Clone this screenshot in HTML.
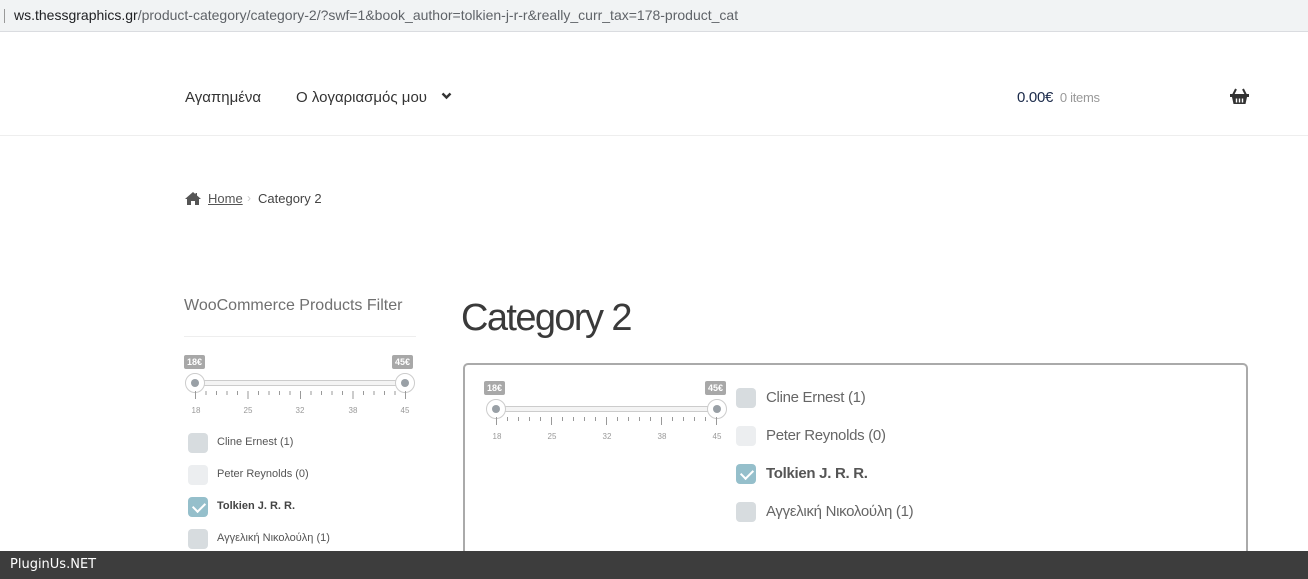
<!DOCTYPE html>
<html><head><meta charset="utf-8"><style>
*{margin:0;padding:0;box-sizing:border-box}
html,body{width:1308px;height:579px;overflow:hidden}
body{background:#fff;font-family:"Liberation Sans","DejaVu Sans",sans-serif;position:relative;color:#404040}
.a{position:absolute;white-space:nowrap}
.lab{position:absolute;background:#a8a8a8;color:#fff;font-size:9px;font-weight:bold;height:14px;line-height:14px;padding:0 3px;border-radius:2px}
.trk{position:absolute;height:6px;border:1px solid #ccc;background:#f4f4f4;border-radius:3px}
.hd{position:absolute;width:20px;height:20px;border-radius:50%;background:#fff;border:1px solid #ccc}
.hd:after{content:"";position:absolute;left:5px;top:5px;width:8px;height:8px;border-radius:50%;background:#99a0a6}
.num{position:absolute;font-size:8px;color:#999;transform:translateX(-50%)}
.cb{position:absolute;width:20px;height:20px;border-radius:4px;background:#d7dcdf}
.cb.l{background:#eceef0}
.cb.c{background:#95bfcb}
.cb.c:after{content:"";position:absolute;left:7px;top:3px;width:6px;height:10px;border:solid #fff;border-width:0 2px 2px 0;transform:rotate(45deg)}
.it{font-size:15px;color:#666;letter-spacing:-0.3px}
</style></head><body>
<div class="a" style="left:0;top:0;width:1308px;height:32px;background:#f1f3f4;border-bottom:1px solid #dadce0"></div>
<div class="a" style="left:4px;top:9px;width:1px;height:14px;background:#999"></div>
<div class="a" style="left:14px;top:7px;font-size:14px;color:#202124">ws.thessgraphics.gr<span style="color:#5f6368">/product-category/category-2/?swf=1&amp;book_author=tolkien-j-r-r&amp;really_curr_tax=178-product_cat</span></div>
<div class="a" style="left:0;top:135px;width:1308px;height:1px;background:#eee"></div>
<div class="a" style="left:185px;top:89px;font-size:15px;color:#333">Αγαπημένα</div>
<div class="a" style="left:296px;top:89px;font-size:15px;color:#333">Ο λογαριασμός μου</div>
<svg class="a" style="left:441px;top:91px" width="11" height="10" viewBox="0 0 11 10"><path d="M1.5 2.5 L5.5 6.5 L9.5 2.5" stroke="#333" stroke-width="2.4" fill="none"/></svg>
<div class="a" style="left:1017px;top:89px;font-size:15px;color:#1b2a4a;letter-spacing:-0.3px">0.00€ <span style="font-size:13px;color:#999;margin-left:3px">0 items</span></div>
<svg class="a" style="left:1230px;top:88px" width="19" height="17" viewBox="0 0 19 17"><path d="M6 1 L3 7 M13 1 L16 7" stroke="#333" stroke-width="2" fill="none"/><rect x="0" y="6" width="19" height="3" fill="#333"/><path d="M2 9 L3.5 16 L15.5 16 L17 9 Z" fill="#333"/><path d="M6.5 10.5v4M9.5 10.5v4M12.5 10.5v4" stroke="#fff" stroke-width="1.4"/></svg>
<svg class="a" style="left:185px;top:192px" width="16" height="13" viewBox="0 0 16 13"><path d="M8 0 L0 7 L2 7 L2 13 L6 13 L6 9 L10 9 L10 13 L14 13 L14 7 L16 7 L12 3.5 L12 1 L10.5 1 L10.5 2.2 Z" fill="#555"/></svg>
<div class="a" style="left:208px;top:191px;font-size:13px;color:#555;text-decoration:underline">Home</div>
<div class="a" style="left:247px;top:191px;font-size:12px;color:#ccc">›</div>
<div class="a" style="left:258px;top:191px;font-size:13px;color:#444">Category 2</div>
<div class="a" style="left:184px;top:297px;font-size:16px;color:#707070">WooCommerce Products Filter</div>
<div class="a" style="left:184px;top:336px;width:232px;height:1px;background:#eee"></div>
<div class="a" style="left:461px;top:297px;font-size:38px;color:#3a3a3a;letter-spacing:-1.6px">Category 2</div>

<div class="lab" style="left:184px;top:355px">18€</div>
<div class="lab" style="left:392px;top:355px">45€</div>
<div class="trk" style="left:195px;top:380px;width:210px"></div>
<div class="hd" style="left:185px;top:373px"></div>
<div class="hd" style="left:395px;top:373px"></div>
<div class="num" style="left:196px;top:406px">18</div><div class="num" style="left:248px;top:406px">25</div><div class="num" style="left:300px;top:406px">32</div><div class="num" style="left:353px;top:406px">38</div><div class="num" style="left:405px;top:406px">45</div>

<div class="cb" style="left:188px;top:433px"></div><div class="a" style="left:217px;top:436px;font-size:11px;color:#555">Cline Ernest (1)</div>
<div class="cb l" style="left:188px;top:465px"></div><div class="a" style="left:217px;top:468px;font-size:11px;color:#555">Peter Reynolds (0)</div>
<div class="cb c" style="left:188px;top:497px"></div><div class="a" style="left:217px;top:500px;font-size:11px;color:#444;font-weight:bold">Tolkien J. R. R.</div>
<div class="cb" style="left:188px;top:529px"></div><div class="a" style="left:217px;top:532px;font-size:11px;color:#555">Αγγελική Νικολούλη (1)</div>

<div class="a" style="left:463px;top:363px;width:785px;height:210px;border:2px solid #aaa;border-radius:5px"></div>
<div class="lab" style="left:484px;top:381px">18€</div>
<div class="lab" style="left:705px;top:381px">45€</div>
<div class="trk" style="left:496px;top:406px;width:221px"></div>
<div class="hd" style="left:486px;top:399px"></div>
<div class="hd" style="left:707px;top:399px"></div>
<div class="num" style="left:497px;top:432px">18</div><div class="num" style="left:552px;top:432px">25</div><div class="num" style="left:607px;top:432px">32</div><div class="num" style="left:662px;top:432px">38</div><div class="num" style="left:717px;top:432px">45</div>

<div class="cb" style="left:736px;top:388px"></div><div class="a it" style="left:766px;top:389px">Cline Ernest (1)</div>
<div class="cb l" style="left:736px;top:426px"></div><div class="a it" style="left:766px;top:427px">Peter Reynolds (0)</div>
<div class="cb c" style="left:736px;top:464px"></div><div class="a it" style="left:766px;top:465px;color:#555;font-weight:bold">Tolkien J. R. R.</div>
<div class="cb" style="left:736px;top:502px"></div><div class="a it" style="left:766px;top:503px">Αγγελική Νικολούλη (1)</div>

<div class="a" style="left:0;top:551px;width:1308px;height:28px;background:#3d3d3d"></div>
<div class="a" style="left:10px;top:557px;color:#fff;font-family:'DejaVu Sans',sans-serif;font-size:13px">PluginUs.NET</div>

<svg class="a" style="left:0;top:0;pointer-events:none" width="1308" height="579">
<g stroke="#999" stroke-width="1">
<path d="M195.5 391v8M206 391v4M216.5 391v4M227 391v4M237.5 391v4M248 391v8M258.5 391v4M269 391v4M279.5 391v4M290 391v4M300.5 391v8M311 391v4M321.5 391v4M332 391v4M342.5 391v4M353 391v8M363.5 391v4M374 391v4M384.5 391v4M395 391v4M405.5 391v8"/>
<path d="M496.5 417v8M507.5 417v4M518.5 417v4M529.5 417v4M540.5 417v4M551.5 417v8M562.5 417v4M573.5 417v4M584.5 417v4M595.5 417v4M606.5 417v8M617.5 417v4M628.5 417v4M639.5 417v4M650.5 417v4M661.5 417v8M672.5 417v4M683.5 417v4M694.5 417v4M705.5 417v4M716.5 417v8"/>
</g></svg>
</body></html>
